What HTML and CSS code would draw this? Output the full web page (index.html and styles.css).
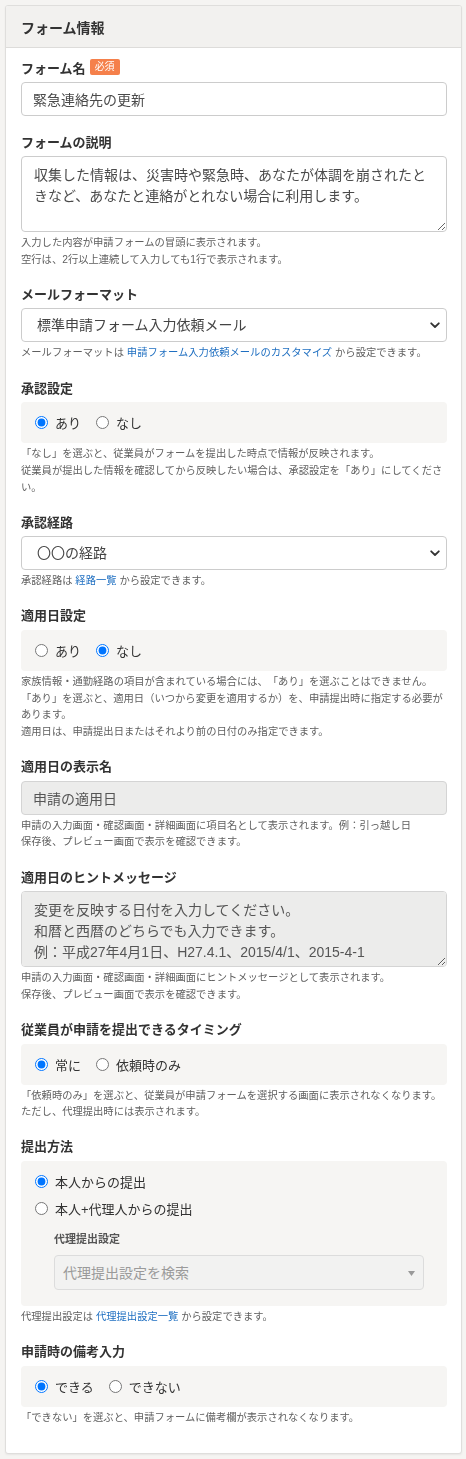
FILE: index.html
```html
<!DOCTYPE html>
<html lang="ja">
<head>
<meta charset="utf-8">
<title>フォーム情報</title>
<link rel="stylesheet" href="styles.css">
</head>
<body>
<div class="page">
  <section class="card">
    <header class="card-header">フォーム情報</header>
    <div class="card-body">

      <div class="field">
        <div class="label">フォーム名<span class="badge">必須</span></div>
        <input class="input" type="text" value="緊急連絡先の更新">
      </div>

      <div class="field">
        <div class="label">フォームの説明</div>
        <textarea class="textarea">収集した情報は、災害時や緊急時、あなたが体調を崩されたときなど、あなたと連絡がとれない場合に利用します。</textarea>
        <p class="help">入力した内容が申請フォームの冒頭に表示されます。<br>空行は、2行以上連続して入力しても1行で表示されます。</p>
      </div>

      <div class="field">
        <div class="label">メールフォーマット</div>
        <div class="select-wrap">
          <select class="select"><option>標準申請フォーム入力依頼メール</option></select>
          <svg class="chevron" width="10" height="7" viewBox="0 0 10 7"><path d="M1.2 1.3 L5 5 L8.8 1.3" fill="none" stroke="#333" stroke-width="1.8" stroke-linecap="round" stroke-linejoin="round"/></svg>
        </div>
        <p class="help">メールフォーマットは <a class="link" href="#">申請フォーム入力依頼メールのカスタマイズ</a> から設定できます。</p>
      </div>

      <div class="field">
        <div class="label">承認設定</div>
        <div class="radio-box">
          <label class="radio"><input type="radio" name="approval" checked><span>あり</span></label>
          <label class="radio"><input type="radio" name="approval"><span>なし</span></label>
        </div>
        <p class="help">「なし」を選ぶと、従業員がフォームを提出した時点で情報が反映されます。<br>従業員が提出した情報を確認してから反映したい場合は、承認設定を「あり」にしてください。</p>
      </div>

      <div class="field">
        <div class="label">承認経路</div>
        <div class="select-wrap">
          <select class="select"><option>〇〇の経路</option></select>
          <svg class="chevron" width="10" height="7" viewBox="0 0 10 7"><path d="M1.2 1.3 L5 5 L8.8 1.3" fill="none" stroke="#333" stroke-width="1.8" stroke-linecap="round" stroke-linejoin="round"/></svg>
        </div>
        <p class="help">承認経路は <a class="link" href="#">経路一覧</a> から設定できます。</p>
      </div>

      <div class="field">
        <div class="label">適用日設定</div>
        <div class="radio-box">
          <label class="radio"><input type="radio" name="applydate"><span>あり</span></label>
          <label class="radio"><input type="radio" name="applydate" checked><span>なし</span></label>
        </div>
        <p class="help">家族情報・通勤経路の項目が含まれている場合には、「あり」を選ぶことはできません。<br>「あり」を選ぶと、適用日（いつから変更を適用するか）を、申請提出時に指定する必要があります。<br>適用日は、申請提出日またはそれより前の日付のみ指定できます。</p>
      </div>

      <div class="field">
        <div class="label">適用日の表示名</div>
        <input class="input input-disabled" type="text" value="申請の適用日" readonly>
        <p class="help">申請の入力画面・確認画面・詳細画面に項目名として表示されます。例：引っ越し日<br>保存後、プレビュー画面で表示を確認できます。</p>
      </div>

      <div class="field">
        <div class="label">適用日のヒントメッセージ</div>
        <textarea class="textarea textarea-disabled" readonly>変更を反映する日付を入力してください。
和暦と西暦のどちらでも入力できます。
例：平成27年4月1日、H27.4.1、2015/4/1、2015-4-1</textarea>
        <p class="help">申請の入力画面・確認画面・詳細画面にヒントメッセージとして表示されます。<br>保存後、プレビュー画面で表示を確認できます。</p>
      </div>

      <div class="field">
        <div class="label">従業員が申請を提出できるタイミング</div>
        <div class="radio-box">
          <label class="radio"><input type="radio" name="timing" checked><span>常に</span></label>
          <label class="radio"><input type="radio" name="timing"><span>依頼時のみ</span></label>
        </div>
        <p class="help">「依頼時のみ」を選ぶと、従業員が申請フォームを選択する画面に表示されなくなります。<br>ただし、代理提出時には表示されます。</p>
      </div>

      <div class="field">
        <div class="label">提出方法</div>
        <div class="radio-box radio-box-stack">
          <label class="radio radio-row"><input type="radio" name="method" checked><span>本人からの提出</span></label>
          <label class="radio radio-row"><input type="radio" name="method"><span>本人+代理人からの提出</span></label>
          <div class="sub">
            <div class="sub-label">代理提出設定</div>
            <div class="fake-select">
              <span>代理提出設定を検索</span>
              <svg class="caret" width="7" height="5" viewBox="0 0 7 5"><path d="M0 0 H7 L3.5 5 Z" fill="#999"/></svg>
            </div>
          </div>
        </div>
        <p class="help">代理提出設定は <a class="link" href="#">代理提出設定一覧</a> から設定できます。</p>
      </div>

      <div class="field">
        <div class="label">申請時の備考入力</div>
        <div class="radio-box">
          <label class="radio"><input type="radio" name="remark" checked><span>できる</span></label>
          <label class="radio"><input type="radio" name="remark"><span>できない</span></label>
        </div>
        <p class="help">「できない」を選ぶと、申請フォームに備考欄が表示されなくなります。</p>
      </div>

    </div>
  </section>
</div>
</body>
</html>
```

FILE: styles.css
```css
html, body {
  margin: 0;
  padding: 0;
  background: #f5f4f2;
}

body {
  font-family: "Liberation Sans", "Noto Sans CJK JP", sans-serif;
  color: #333;
  text-spacing-trim: space-all;
}

.page {
  padding: 5px 4px 7px 5px;
}

.card {
  background: #fff;
  border: 1px solid #dfdedc;
  border-radius: 3px;
  box-shadow: 0 1px 2px rgba(0, 0, 0, 0.06);
  overflow: hidden;
}

.card-header {
  height: 41px;
  display: flex;
  align-items: center;
  padding: 0 15px;
  background: #f2f1ef;
  border-bottom: 1px solid #dddcda;
  font-size: 14px;
  font-weight: bold;
  color: #333;
}

.card-body {
  padding: 10px 14px 11px 15px;
}

.field {
  margin-bottom: 16px;
}

.label {
  display: flex;
  align-items: center;
  height: 18px;
  margin-bottom: 6px;
  font-size: 13px;
  font-weight: bold;
  color: #333;
}

.badge {
  display: inline-block;
  height: 16px;
  line-height: 16px;
  margin-left: 4px;
  padding: 0 5px;
  background: #f5804b;
  color: #fff;
  font-size: 10px;
  font-weight: normal;
  border-radius: 2px;
}

.input {
  display: block;
  box-sizing: border-box;
  width: 100%;
  height: 34px;
  margin: 0;
  padding: 0 11px;
  border: 1px solid #cccccc;
  border-radius: 4px;
  background: #fff;
  font-family: inherit;
  font-size: 14px;
  color: #4a4a4a;
  outline: none;
}

.textarea {
  display: block;
  box-sizing: border-box;
  width: 100%;
  height: 76px;
  margin: 0;
  padding: 8px 12px;
  border: 1px solid #cccccc;
  border-radius: 4px;
  background: #fff;
  font-family: inherit;
  font-size: 14px;
  line-height: 21px;
  color: #4a4a4a;
  outline: none;
  resize: vertical;
}

.input-disabled,
.textarea-disabled {
  background: #ececeb;
  border-color: #d4d4d4;
  color: #555;
}

.select-wrap {
  position: relative;
}

.select {
  display: block;
  box-sizing: border-box;
  width: 100%;
  height: 34px;
  margin: 0;
  padding: 0 30px 0 15px;
  border: 1px solid #cccccc;
  border-radius: 4px;
  background: #fff;
  font-family: inherit;
  font-size: 14px;
  color: #444;
  appearance: none;
  -webkit-appearance: none;
  outline: none;
}

.chevron {
  position: absolute;
  right: 7px;
  top: 14px;
  pointer-events: none;
}

.help {
  margin: 3px 0 0;
  font-size: 10.3px;
  line-height: 16.7px;
  color: #606060;
}

.link {
  color: #1f6fc1;
  text-decoration: none;
}

.radio-box {
  display: flex;
  align-items: center;
  height: 41px;
  padding: 0 14px;
  background: #f6f5f3;
  border-radius: 4px;
}

.radio {
  display: inline-flex;
  align-items: center;
  margin-right: 15px;
  font-size: 13px;
  color: #333;
}

.radio input {
  width: 13px;
  height: 13px;
  margin: 0 7px 0 0;
}

.radio-box-stack {
  display: block;
  height: auto;
  padding: 7px 0 16px;
}

.radio-row {
  display: flex;
  height: 27px;
  padding: 0 14px;
  margin-right: 0;
}

.sub {
  padding: 8px 23px 0 33px;
}

.sub-label {
  height: 18px;
  line-height: 18px;
  margin-bottom: 7px;
  font-size: 11px;
  font-weight: bold;
  color: #555;
}

.fake-select {
  position: relative;
  display: flex;
  align-items: center;
  box-sizing: border-box;
  height: 35px;
  padding: 0 8px;
  background: #f2f2f1;
  border: 1px solid #dcdcdc;
  border-radius: 4px;
  font-size: 14px;
  color: #9a9a9a;
}

.caret {
  position: absolute;
  right: 8px;
  top: 15px;
}
```
